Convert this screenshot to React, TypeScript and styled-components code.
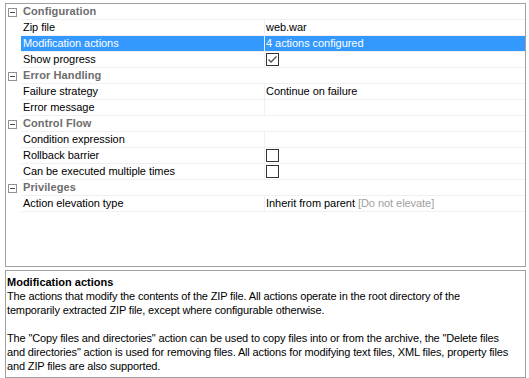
import React from "react";
import styled, { createGlobalStyle } from "styled-components";

interface Property {
  name: string;
  value?: string;
  hint?: string;
  check?: boolean;
  selected?: boolean;
}

interface Group {
  title: string;
  items: Property[];
}

const groups: Group[] = [
  {
    title: "Configuration",
    items: [
      { name: "Zip file", value: "web.war" },
      { name: "Modification actions", value: "4 actions configured", selected: true },
      { name: "Show progress", check: true },
    ],
  },
  {
    title: "Error Handling",
    items: [
      { name: "Failure strategy", value: "Continue on failure" },
      { name: "Error message" },
    ],
  },
  {
    title: "Control Flow",
    items: [
      { name: "Condition expression" },
      { name: "Rollback barrier", check: false },
      { name: "Can be executed multiple times", check: false },
    ],
  },
  {
    title: "Privileges",
    items: [{ name: "Action elevation type", value: "Inherit from parent", hint: "[Do not elevate]" }],
  },
];

const GlobalStyle = createGlobalStyle`
  body {
    margin: 0;
    background: #fff;
    font-family: "Liberation Sans", Arial, sans-serif;
    font-size: 11px;
    color: #000;
  }
`;

const Page = styled.div`
  width: 529px;
  height: 378px;
  box-sizing: border-box;
  padding: 3px 3px 3px 5px;
  display: flex;
  flex-direction: column;
  gap: 3px;
`;

const GridPanel = styled.div`
  height: 264px;
  flex: none;
  border: 1px solid #a0a0a0;
  box-sizing: border-box;
  overflow: hidden;
`;

const Row = styled.div`
  display: flex;
  height: 16px;
`;

const Gutter = styled.div`
  width: 15px;
  flex: none;
`;

const Content = styled.div<{ $selected?: boolean }>`
  flex: 1;
  display: flex;
  box-sizing: border-box;
  border-bottom: 1px solid #f0f0f0;
  background: ${(p) => (p.$selected ? "#3399ff" : "transparent")};
  color: ${(p) => (p.$selected ? "#fff" : "#000")};
  line-height: 15px;
  white-space: nowrap;
  letter-spacing: -0.05px;
`;

const GroupTitle = styled.div`
  padding-left: 2px;
  font-weight: bold;
  color: #6d6d6d;
  letter-spacing: 0.1px;
`;

const NameCell = styled.div`
  width: 244px;
  flex: none;
  padding-left: 2px;
  box-sizing: border-box;
  border-right: 1px solid #f0f0f0;
`;

const ValueCell = styled.div`
  flex: 1;
  padding-left: 1px;
  display: flex;
  align-items: flex-start;
`;

const Hint = styled.span`
  color: #a0a0a0;
  margin-left: 3px;
`;

const Expander = styled.div`
  width: 9px;
  height: 9px;
  margin: 4px 0 0 2px;
  box-sizing: border-box;
  border: 1px solid #919191;
  position: relative;
  &::after {
    content: "";
    position: absolute;
    left: 1px;
    right: 1px;
    top: 3px;
    height: 1px;
    background: #4a4a4a;
  }
`;

const CheckBox = styled.div`
  width: 13px;
  height: 13px;
  margin-top: 1px;
  box-sizing: border-box;
  border: 1px solid #333;
  background: #fff;
  display: flex;
  align-items: center;
  justify-content: center;
`;

const Description = styled.div`
  flex: 1;
  border: 1px solid #a0a0a0;
  box-sizing: border-box;
  padding: 4px 1px;
  line-height: 14px;
  white-space: nowrap;
  letter-spacing: -0.15px;
`;

const DescTitle = styled.div`
  font-weight: bold;
  letter-spacing: 0;
`;

const Para = styled.p`
  margin: 0 0 14px;
  &:last-child {
    margin: 0;
  }
`;

const Check = () => (
  <svg width="11" height="11" viewBox="0 0 11 11">
    <path d="M1.5 5.5 L4 8 L9.5 2.5" fill="none" stroke="#4d4d4d" strokeWidth="1.3" />
  </svg>
);

const PropertyRow = ({ name, value, hint, check, selected }: Property) => (
  <Row>
    <Gutter />
    <Content $selected={selected}>
      <NameCell>{name}</NameCell>
      <ValueCell>
        {check !== undefined ? <CheckBox>{check && <Check />}</CheckBox> : value}
        {hint && <Hint>{hint}</Hint>}
      </ValueCell>
    </Content>
  </Row>
);

const App = () => {
  return (
    <>
      <GlobalStyle />
      <Page>
        <GridPanel>
          {groups.map((group) => (
            <React.Fragment key={group.title}>
              <Row>
                <Gutter>
                  <Expander />
                </Gutter>
                <Content>
                  <GroupTitle>{group.title}</GroupTitle>
                </Content>
              </Row>
              {group.items.map((item) => (
                <PropertyRow key={item.name} {...item} />
              ))}
            </React.Fragment>
          ))}
        </GridPanel>
        <Description>
          <DescTitle>Modification actions</DescTitle>
          <Para>
            The actions that modify the contents of the ZIP file. All actions operate in the root directory of the
            <br />
            temporarily extracted ZIP file, except where configurable otherwise.
          </Para>
          <Para>
            The "Copy files and directories" action can be used to copy files into or from the archive, the "Delete files
            <br />
            and directories" action is used for removing files. All actions for modifying text files, XML files, property files
            <br />
            and ZIP files are also supported.
          </Para>
        </Description>
      </Page>
    </>
  );
};

export default App;
